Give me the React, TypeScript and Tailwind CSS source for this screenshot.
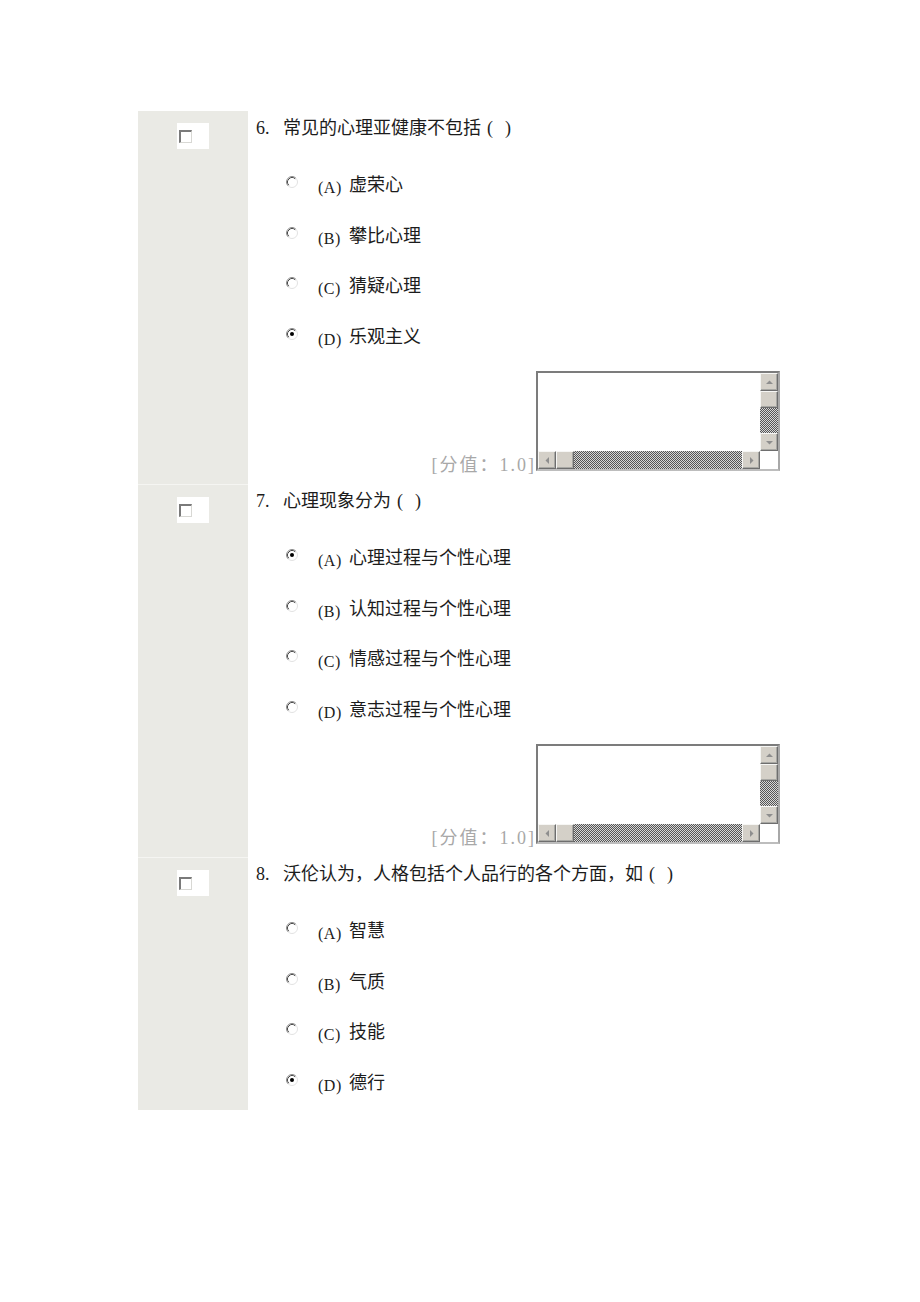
import React from 'react'

// --- 数据 ---
type Question = {
  no: number
  title: string
  options: string[]
  checked: number
  score?: boolean
}

const questions: Question[] = [
  { no: 6, title: '常见的心理亚健康不包括', options: ['虚荣心', '攀比心理', '猜疑心理', '乐观主义'], checked: 3, score: true },
  { no: 7, title: '心理现象分为', options: ['心理过程与个性心理', '认知过程与个性心理', '情感过程与个性心理', '意志过程与个性心理'], checked: 0, score: true },
  { no: 8, title: '沃伦认为，人格包括个人品行的各个方面，如', options: ['智慧', '气质', '技能', '德行'], checked: 3 },
]

const letters = ['A', 'B', 'C', 'D']

const font = { fontFamily: '"Liberation Serif", "Noto Sans CJK SC", serif' }

// --- 小部件 ---
const Radio: React.FC<{ on: boolean }> = ({ on }) => (
  <svg width="12" height="12" viewBox="0 0 12 12" className="shrink-0">
    <circle cx="6" cy="6" r="5.5" fill="#fff" />
    <path d="M2.11 9.89 A5.5 5.5 0 0 1 9.89 2.11" fill="none" stroke="#8c8c8c" />
    <path d="M9.89 2.11 A5.5 5.5 0 0 1 2.11 9.89" fill="none" stroke="#e2e2e2" />
    <path d="M2.82 9.18 A4.5 4.5 0 0 1 9.18 2.82" fill="none" stroke="#4a4a4a" />
    {on && <circle cx="6" cy="6" r="2" fill="#000" />}
  </svg>
)

const Checkbox = () => (
  <div className="w-[13px] h-[13px] bg-white border-t-2 border-l-2 border-t-[#7a7a7a] border-l-[#7a7a7a] border-r border-b border-r-[#d8d8d4] border-b-[#d8d8d4]" />
)

const Arrow: React.FC<{ dir: 'up' | 'down' | 'left' | 'right' }> = ({ dir }) => {
  const d = {
    up: 'M1 6 L4.5 2.5 L8 6 Z',
    down: 'M1 3 L4.5 6.5 L8 3 Z',
    left: 'M6 1 L2.5 4.5 L6 8 Z',
    right: 'M3 1 L6.5 4.5 L3 8 Z',
  }[dir]
  return (
    <svg width="9" height="9" viewBox="0 0 9 9">
      <path d={d} fill="#8e8e8e" />
    </svg>
  )
}

const Bevel: React.FC<{ children?: React.ReactNode; className?: string }> = ({ children, className = '' }) => (
  <div className={`bg-[#d4d0c8] border border-t-[#f6f6f4] border-l-[#f6f6f4] border-r-[#6e6e6e] border-b-[#6e6e6e] shadow-[inset_-1px_-1px_0_#a8a8a4] flex items-center justify-center ${className}`}>
    {children}
  </div>
)

const trackCls = 'bg-[image:repeating-conic-gradient(#555555_0_25%,#d6d6d6_0_50%)] bg-[length:2px_2px]'

const TextBox = () => (
  <div className="w-[244px] h-[100px] border-2 border-t-[#7c7c7c] border-l-[#7c7c7c] border-r-[#a8a8a8] border-b-[#bdbdbd] bg-white grid grid-cols-[1fr_18px] grid-rows-[1fr_18px]">
    <div />
    <div className="flex flex-col">
      <Bevel className="h-[18px]"><Arrow dir="up" /></Bevel>
      <Bevel className="h-[17px]" />
      <div className={`flex-1 ${trackCls}`} />
      <Bevel className="h-[18px]"><Arrow dir="down" /></Bevel>
    </div>
    <div className="flex">
      <Bevel className="w-[18px]"><Arrow dir="left" /></Bevel>
      <Bevel className="w-[18px]" />
      <div className={`flex-1 ${trackCls}`} />
      <Bevel className="w-[18px]"><Arrow dir="right" /></Bevel>
    </div>
    <div className="bg-white" />
  </div>
)

const QuestionRow: React.FC<{ q: Question; first: boolean }> = ({ q, first }) => (
  <div className="flex">
    <div className={`w-[110px] shrink-0 bg-[#eaeae5] ${first ? '' : 'border-t border-[#f5f5f2]'}`}>
      <div className="mt-[12px] ml-[39px] w-[32px] h-[26px] bg-white pl-[2px] pt-[7px]">
        <Checkbox />
      </div>
    </div>
    <div className={`flex-1 pl-[8px] ${q.score ? 'pb-[13px]' : 'pb-[2px]'}`}>
      <div className="mt-[5px] h-[24px] leading-[24px] text-[18px] text-[#1c1c1c] whitespace-nowrap">
        <span className="inline-block w-[27px]">{q.no}.</span>
        {q.title}
        <span className="inline-block w-[18px] text-center">(</span>
        <span className="inline-block w-[18px] text-center">)</span>
      </div>
      <div className="mt-[20px]">
        {q.options.map((opt, i) => (
          <div key={opt} className="h-[50.5px] flex items-center pl-[30px] whitespace-nowrap">
            <div className="relative -top-[3px]">
              <Radio on={q.checked === i} />
            </div>
            <span className="ml-[20px] w-[31px] text-[16px] tracking-[0.5px] text-[#1c1c1c] relative top-[3px]">({letters[i]})</span>
            <span className="text-[18px] leading-[24px] text-[#1c1c1c]">{opt}</span>
          </div>
        ))}
      </div>
      {q.score && (
        <div className="mt-[9px] flex justify-end items-end">
          <span className="text-[18px] leading-[22px] tracking-[2px] text-[#a8a8a8] -mb-[5px] whitespace-nowrap">[分值：1.0]</span>
          <TextBox />
        </div>
      )}
    </div>
  </div>
)

export default function App() {
  return (
    <div className="min-h-[1302px] bg-white pt-[111px] [text-spacing-trim:space-all]" style={font}>
      <div className="ml-[138px] w-[642px]">
        {questions.map((q, i) => (
          <QuestionRow key={q.no} q={q} first={i === 0} />
        ))}
      </div>
    </div>
  )
}
